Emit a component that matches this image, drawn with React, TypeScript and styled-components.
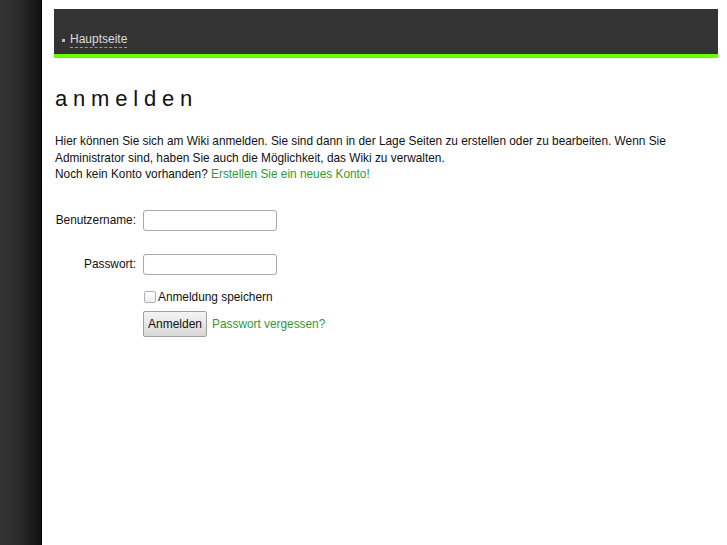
import React from 'react'
import styled, { createGlobalStyle } from 'styled-components'

const Global = createGlobalStyle`
  html, body {
    margin: 0;
    padding: 0;
    height: 100%;
    background: #fff;
  }
  body {
    font-family: "Liberation Sans", Arial, sans-serif;
    font-size: 11.85px;
    color: #111;
  }
  #root {
    height: 100%;
  }
`

const Page = styled.div`
  display: flex;
  min-height: 545px;
  height: 100%;
`

const SideBand = styled.div`
  width: 41px;
  flex: none;
  border-right: 1px solid #000;
  background: linear-gradient(to right, #333 0%, #303030 30%, #262626 55%, #1a1a1a 80%, #111 100%);
`

const Main = styled.div`
  flex: 1;
  padding: 9px 9px 0 12px;
`

const TopBar = styled.div`
  height: 49px;
  box-sizing: border-box;
  background: #333;
  border-bottom: 4px solid #66ff00;
  display: flex;
  align-items: flex-end;
  padding: 0 0 6px 8px;
`

const NavItem = styled.a`
  display: flex;
  align-items: center;
  gap: 5px;
  color: #ddd;
  font-size: 12px;
  text-decoration: none;
  &::before {
    content: '';
    width: 3px;
    height: 3px;
    background: #bbb;
  }
  span {
    border-bottom: 1px dashed #999;
    padding-bottom: 1px;
    line-height: 14px;
  }
`

const Title = styled.h1`
  margin: 27px 0 0 1px;
  font-size: 22px;
  font-weight: normal;
  letter-spacing: 5.8px;
  color: #111;
  line-height: 28px;
`

const Intro = styled.p`
  margin: 20px 0 0 1px;
  line-height: 16.5px;
`

const GreenLink = styled.a`
  color: #339933;
  text-decoration: none;
`

const Form = styled.form`
  margin-top: 27px;
  display: grid;
  grid-template-columns: 82px 134px max-content;
  column-gap: 7px;
  align-items: center;
`

const Label = styled.label`
  text-align: right;
  grid-column: 1;
`

const Field = styled.input`
  grid-column: 2;
  height: 21px;
  box-sizing: border-box;
  border: 1px solid #a8a8a8;
  border-radius: 3px;
  background: #fff;
  margin: 0;
`

const Spacer = styled.div<{ $h: number }>`
  grid-column: 1 / -1;
  height: ${p => p.$h}px;
`

const CheckRow = styled.label`
  grid-column: 2 / -1;
  display: flex;
  align-items: center;
  gap: 2px;
  input {
    margin: 0 0 0 1px;
    width: 12px;
    height: 12px;
    appearance: none;
    border: 1px solid #b0b0b0;
    border-radius: 2px;
    background: linear-gradient(#fff, #eee);
  }
`

const Actions = styled.div`
  grid-column: 2 / -1;
  display: flex;
  align-items: center;
  gap: 5px;
`

const Submit = styled.button`
  height: 26px;
  padding: 0 4px;
  font-family: inherit;
  font-size: 12px;
  color: #111;
  border: 1px solid #a0a0a0;
  border-radius: 2px;
  background: linear-gradient(#f4f4f4, #d8d8d8);
`

export default function App() {
  return (
    <>
      <Global />
      <Page>
        <SideBand />
        <Main>
          <TopBar>
            <NavItem href="#"><span>Hauptseite</span></NavItem>
          </TopBar>
          <Title>anmelden</Title>
          <Intro>
            Hier können Sie sich am Wiki anmelden. Sie sind dann in der Lage Seiten zu erstellen oder zu bearbeiten. Wenn Sie
            Administrator sind, haben Sie auch die Möglichkeit, das Wiki zu verwalten.
            <br />
            Noch kein Konto vorhanden? <GreenLink href="#">Erstellen Sie ein neues Konto!</GreenLink>
          </Intro>
          <Form onSubmit={e => e.preventDefault()}>
            <Label htmlFor="user">Benutzername:</Label>
            <Field id="user" type="text" />
            <Spacer $h={23} />
            <Label htmlFor="pass">Passwort:</Label>
            <Field id="pass" type="password" />
            <Spacer $h={15} />
            <CheckRow>
              <input type="checkbox" />
              Anmeldung speichern
            </CheckRow>
            <Spacer $h={7} />
            <Actions>
              <Submit type="submit">Anmelden</Submit>
              <GreenLink href="#">Passwort vergessen?</GreenLink>
            </Actions>
          </Form>
        </Main>
      </Page>
    </>
  )
}
